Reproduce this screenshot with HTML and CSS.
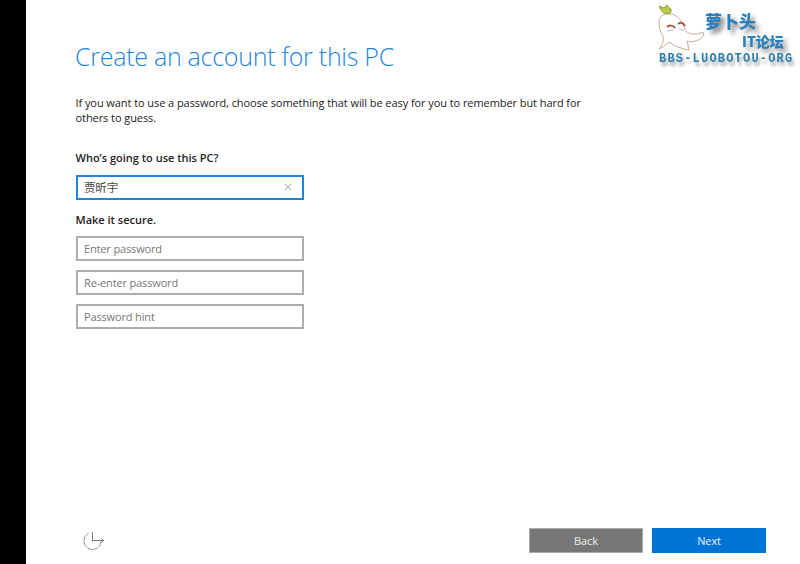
FILE: index.html
```html
<!DOCTYPE html>
<html lang="en">
<head>
<meta charset="utf-8">
<title>Create an account for this PC</title>
<link rel="stylesheet" href="styles.css">
</head>
<body>
<div class="screen">
  <aside class="edge"></aside>
  <main class="main">
    <div class="content">
      <h1 class="title">Create an account for this PC</h1>
      <p class="intro">If you want to use a password, choose something that will be easy for you to remember but hard for others to guess.</p>
      <h2 class="label label-who">Who’s going to use this PC?</h2>
      <div class="field field-active">
        <span class="value">贾昕宇</span>
        <svg class="clear" width="8" height="8" viewBox="0 0 8 8" fill="none" stroke="#a0a0a0" stroke-width="1"><path d="M1 1L7 7M7 1L1 7"/></svg>
      </div>
      <h2 class="label label-secure">Make it secure.</h2>
      <div class="stack">
        <div class="field"><span class="hint">Enter password</span></div>
        <div class="field"><span class="hint">Re-enter password</span></div>
        <div class="field"><span class="hint">Password hint</span></div>
      </div>
    </div>
    <footer class="footer">
      <svg class="access" width="24" height="24" viewBox="0 0 24 24" fill="none" stroke="#7a7a7a" stroke-width="1">
        <path d="M7.5 4.5A8.5 8.5 0 1 0 20 11.5" stroke-dasharray="2 .5"/>
        <path d="M11.5 3V12.5M11.5 11.5H22.5M20.2 9.2L22.5 11.5L20.2 13.8"/>
      </svg>
      <div class="actions">
        <button class="btn btn-back">Back</button>
        <button class="btn btn-next">Next</button>
      </div>
    </footer>
  </main>
  <div class="logo">
    <svg class="mascot" width="60" height="56" viewBox="0 0 60 56">
      <path d="M3 20C3 14 8 11 15 12C22 13 27 20 29 28C33 33 40 33 47 30L48 33C44 38 38 41 31 39L33 48C26 47 18 44 13 40C10 43 7 45 3 47C7 42 8 38 7 34C4 30 3 25 3 20Z" fill="#fff" stroke="#c9a99a" stroke-width="1"/>
      <path d="M5 8L3 4L8 6L11 3L13 6L15 7L15 10C13 13 7 12 5 8Z" fill="#b9c94a" stroke="#7d8f2a" stroke-width=".8"/>
      <path d="M11 25C13 23 17 23 19 26M22 22C24 20 27 20 29 24" stroke="#a8593f" stroke-width="2" fill="none"/>
      <path d="M11 29L17 28M23 27L28 29" stroke="#bbb" stroke-width="1" fill="none"/>
    </svg>
    <div class="logo-name">萝卜头</div>
    <div class="logo-it">IT论坛</div>
    <div class="logo-url">BBS-LUOBOTOU-ORG</div>
  </div>
</div>
</body>
</html>
```
FILE: styles.css
```css
* { box-sizing: border-box; }
html, body { margin: 0; height: 100%; background: #fff; overflow: hidden; }
body { font-family: "Open Sans", "Noto Sans CJK SC", sans-serif; color: #2b2b2b; }
.screen { position: relative; display: flex; width: 800px; height: 564px; }
.edge { flex: 0 0 26px; background: #000; }
.main { flex: 1; display: flex; flex-direction: column; justify-content: space-between; padding: 0 34px 11px 50px; }
.content { padding-top: 38px; }
.title { margin: 0 0 0 -1px; font-weight: 300; font-size: 25px; line-height: 36px; letter-spacing: -.27px; color: #1d85dd; }
.intro { margin: 21px 0 0 -.5px; width: 520px; font-size: 11px; line-height: 15px; letter-spacing: -.07px; color: #222; }
.label { margin: 0 0 0 -.5px; font-size: 11px; font-weight: 600; line-height: 16px; color: #222; }
.label-who { margin-top: 25px; }
.label-secure { margin-top: 12px; }
.field { display: flex; align-items: center; justify-content: space-between; width: 228px; height: 25px; padding: 0 10px 1px 6px; border: 2px solid #adadad; font-size: 11px; letter-spacing: -.15px; background: #fff; }
.field-active { margin-top: 9px; border-color: #1e84dc; }
.label-secure + .stack { margin-top: 8px; }
.stack { display: flex; flex-direction: column; gap: 9px; }
.value { color: #444; font-family: "Noto Sans CJK SC", sans-serif; font-size: 11.5px; }
.hint { color: #777; }
.footer { display: flex; align-items: center; justify-content: space-between; }
.access { margin-left: 5px; }
.actions { display: flex; gap: 9px; }
.btn { width: 114px; height: 25px; border: 0; padding: 0; font: 400 11px "Open Sans", sans-serif; letter-spacing: -.1px; color: #eee; }
.btn-back { background: #767676; border: 1px solid #aaa; }
.btn-next { background: #0074d6; color: #e8f2fc; }
.logo { position: absolute; left: 640px; top: 0; width: 160px; height: 72px; filter: blur(.35px); }
.mascot { position: absolute; left: 16px; top: 2px; }
.logo-name { position: absolute; left: 65px; top: 10px; font: 900 17px/22px "Noto Sans CJK SC", sans-serif; color: #2a7fbd; text-shadow: 4px 4px 4px #888; }
.logo-it { position: absolute; left: 102px; top: 32px; font: 900 14px/18px "Noto Sans CJK SC", sans-serif; color: #2a7fbd; text-shadow: 4px 4px 4px #999; white-space: nowrap; }
.logo-url { position: absolute; left: 19px; top: 51px; font: 700 12px/16px "Liberation Mono", monospace; letter-spacing: 1.2px; color: #2f7fae; text-shadow: 2px 4px 3px #aaa; white-space: nowrap; }
```
